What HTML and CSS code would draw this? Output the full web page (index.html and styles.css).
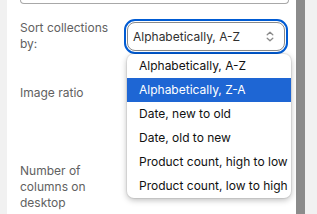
FILE: index.html
```html
<!DOCTYPE html>
<html lang="en">
<head>
<meta charset="utf-8">
<link rel="stylesheet" href="styles.css">
</head>
<body>
<div class="layout">
  <div class="gutter"></div>
  <div class="panel">
    <div class="prev-field"></div>
    <div class="row row-sort">
      <div class="label">Sort collections by:</div>
      <div class="control">
        <div class="select">
          <span class="select-value">Alphabetically, A-Z</span>
          <svg class="chev" width="8" height="11" viewBox="0 0 8 11" aria-hidden="true">
            <path d="M1.2 3.8 L4 1.2 L6.8 3.8 M1.2 7.2 L4 9.8 L6.8 7.2" fill="none" stroke="#8a8a8a" stroke-width="1.3" stroke-linecap="round" stroke-linejoin="round"/>
          </svg>
        </div>
        <ul class="dropdown">
          <li class="opt">Alphabetically, A-Z</li>
          <li class="opt active">Alphabetically, Z-A</li>
          <li class="opt">Date, new to old</li>
          <li class="opt">Date, old to new</li>
          <li class="opt">Product count, high to low</li>
          <li class="opt">Product count, low to high</li>
        </ul>
      </div>
    </div>
    <div class="row row-ratio">
      <div class="label">Image ratio</div>
    </div>
    <div class="row row-cols">
      <div class="label">Number of columns on desktop</div>
    </div>
  </div>
  <div class="scrollbar"></div>
  <div class="rest"></div>
</div>
</body>
</html>
```
FILE: styles.css
```css
html, body {
  margin: 0;
  padding: 0;
}
body {
  width: 317px;
  height: 214px;
  overflow: hidden;
  background: #f1f1f1;
  font-family: Inter, "Noto Sans", sans-serif;
  font-size: 12px;
  line-height: 16px;
}
.layout {
  display: flex;
  height: 214px;
}
.gutter {
  width: 7px;
  flex: none;
  background: #f1f1f1;
}
.panel {
  width: 289px;
  flex: none;
  background: #ffffff;
  padding: 0 8px 0 13px;
  box-sizing: border-box;
}
.scrollbar {
  width: 9px;
  flex: none;
  background: #8b8b8b;
}
.rest {
  flex: 1;
  background: #f1f1f1;
}
.prev-field {
  width: 267px;
  height: 3px;
  border: 1px solid #a8a8a8;
  border-top: 0;
  border-radius: 0 0 8px 8px;
}
.row {
  display: grid;
  grid-template-columns: 96px 164px;
  column-gap: 8px;
}
.label {
  color: #616161;
}
.row-sort {
  margin-top: 15px;
}
.row-sort .label {
  padding-top: 1px;
}
.control {
  position: relative;
  padding: 3px;
}
.select {
  height: 29px;
  box-sizing: border-box;
  border: 1px solid #8a8a8a;
  border-radius: 8px;
  outline: 2px solid #005bd3;
  outline-offset: 1px;
  display: flex;
  align-items: center;
  justify-content: space-between;
  padding: 0 10px 0 5px;
  color: #303030;
}
.chev {
  display: block;
}
.dropdown {
  position: absolute;
  left: 3px;
  top: 35px;
  margin: 0;
  padding: 0;
  list-style: none;
  background: #ffffff;
  border-radius: 7px;
  box-shadow: 0 2px 6px rgba(0,0,0,0.28), 0 0 0 1px rgba(0,0,0,0.06);
  overflow: hidden;
  z-index: 2;
}
.opt {
  height: 24px;
  line-height: 24px;
  padding: 0 3px 0 12px;
  color: #111111;
  white-space: nowrap;
}
.opt.active {
  background: #1e66d4;
  color: #ffffff;
}
.row-ratio {
  margin-top: 31px;
}
.row-cols {
  margin-top: 62px;
}
```
